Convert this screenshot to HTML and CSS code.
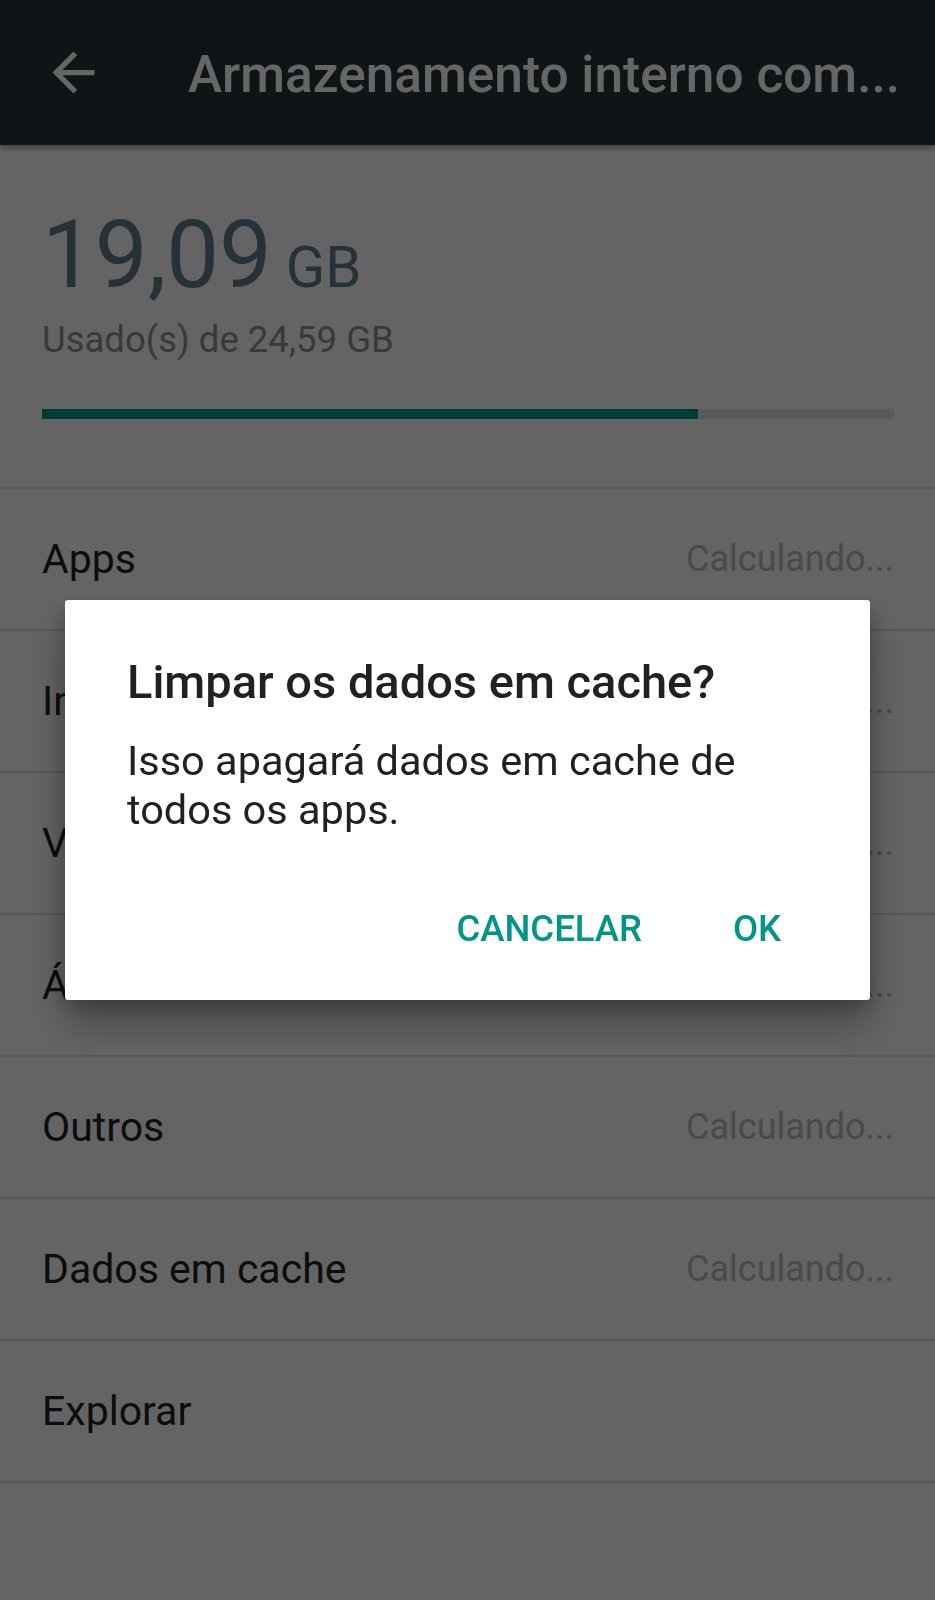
FILE: index.html
```html
<!doctype html>
<html lang="pt-BR">

<head>
    <meta charset="utf-8">
    <meta name="viewport" content="width=device-width, initial-scale=1">
    <title>Armazenamento interno compartilhado</title>
    <link rel="stylesheet" href="styles.css">
</head>

<body>
    <div class="screen">
        <header class="toolbar">
            <button type="button" class="nav-back" aria-label="Voltar">
                <svg viewBox="0 0 24 24" width="63" height="63">
                    <path d="M20 11H7.83l5.59-5.59L12 4l-8 8 8 8 1.41-1.41L7.83 13H20v-2z" fill="currentColor"/>
                </svg>
            </button>
            <h1 class="toolbar-title">Armazenamento interno com...</h1>
        </header>

        <section class="summary">
            <div class="summary-total">
                <span class="summary-used">19,09</span>
                <span class="summary-unit">GB</span>
            </div>
            <div class="summary-of">Usado(s) de 24,59 GB</div>
            <div class="usage-bar">
                <div class="usage-fill" style="width: 77%"></div>
            </div>
        </section>

        <ul class="categories">
            <li class="category"><span class="category-name">Apps</span><span class="category-size">Calculando...</span></li>
            <li class="category"><span class="category-name">Imagens</span><span class="category-size">Calculando...</span></li>
            <li class="category"><span class="category-name">Vídeos</span><span class="category-size">Calculando...</span></li>
            <li class="category"><span class="category-name">Áudio</span><span class="category-size">Calculando...</span></li>
            <li class="category"><span class="category-name">Outros</span><span class="category-size">Calculando...</span></li>
            <li class="category"><span class="category-name">Dados em cache</span><span class="category-size">Calculando...</span></li>
            <li class="category"><span class="category-name">Explorar</span></li>
        </ul>
    </div>

    <!-- dialog over the dimmed screen -->
    <div class="scrim">
        <div class="dialog" role="dialog">
            <h2 class="dialog-title">Limpar os dados em cache?</h2>
            <p class="dialog-text">Isso apagará dados em cache de todos os apps.</p>
            <div class="dialog-actions">
                <button type="button" class="dialog-button">Cancelar</button>
                <button type="button" class="dialog-button">OK</button>
            </div>
        </div>
    </div>
</body>

</html>
```

FILE: styles.css
```css
body {
   margin: 0;
   background-color: #fafafa;
   font-family: Roboto, "Noto Sans", sans-serif;
}

.screen {
   height: 1600px;
   overflow: hidden;
}

/* toolbar */
.toolbar {
   display: flex;
   align-items: center;
   height: 145px;
   background-color: #263238;
   color: #fff;
   box-shadow: 0 3px 6px rgba(0, 0, 0, 0.35);
   position: relative;
}

.nav-back {
   display: flex;
   margin-left: 42px;
   padding: 0;
   border: none;
   background: none;
   color: #fff;
}

.toolbar-title {
   flex: 1;
   min-width: 0;
   margin: 0 16px 0 83px;
   padding-top: 3px;
   font-size: 51.4px;
   font-weight: 500;
   white-space: nowrap;
   overflow: hidden;
}

/* summary */
.summary {
   padding: 55px 41px 68px 42px;
}

.summary-total {
   display: flex;
   align-items: baseline;
   gap: 14px;
   color: #607d8b;
}

.summary-used {
   font-size: 94px;
   line-height: 110px;
}

.summary-unit {
   font-size: 58px;
}

.summary-of {
   margin-top: 8px;
   font-size: 36.5px;
   line-height: 44px;
   color: #8f8f8f;
}

.usage-bar {
   height: 10px;
   margin-top: 47px;
   background-color: #e0e0e0;
}

.usage-fill {
   height: 100%;
   background-color: #009688;
}

/* list */
.categories {
   margin: 0;
   padding: 0;
   list-style: none;
   border-bottom: 2px solid #dcdcdc;
}

.category {
   display: flex;
   align-items: center;
   justify-content: space-between;
   height: 140px;
   padding: 0 41px 0 42px;
   border-top: 2px solid #dcdcdc;
}

.category-name {
   font-size: 41px;
   color: #212121;
}

.category-size {
   font-size: 36px;
   color: #bababa;
}

/* dialog */
.scrim {
   position: fixed;
   inset: 0;
   display: flex;
   align-items: center;
   justify-content: center;
   background-color: rgba(0, 0, 0, 0.6);
}

.dialog {
   width: 805px;
   padding: 54px 0 25px;
   background-color: #fff;
   border-radius: 3px;
   box-shadow: 0 24px 40px rgba(0, 0, 0, 0.3), 0 8px 18px rgba(0, 0, 0, 0.2);
}

.dialog-title {
   margin: 0 62px;
   font-size: 47px;
   font-weight: 500;
   line-height: 56px;
   color: #212121;
}

.dialog-text {
   margin: 26px 62px 0;
   font-size: 41.5px;
   line-height: 49px;
   color: #212121;
}

.dialog-actions {
   display: flex;
   justify-content: flex-end;
   gap: 11px;
   margin-top: 47px;
   padding-right: 30px;
}

.dialog-button {
   min-width: 166px;
   height: 94px;
   padding: 0 21px;
   border: none;
   background: none;
   font-family: inherit;
   font-size: 36.5px;
   font-weight: 500;
   text-transform: uppercase;
   color: #009688;
}
```
